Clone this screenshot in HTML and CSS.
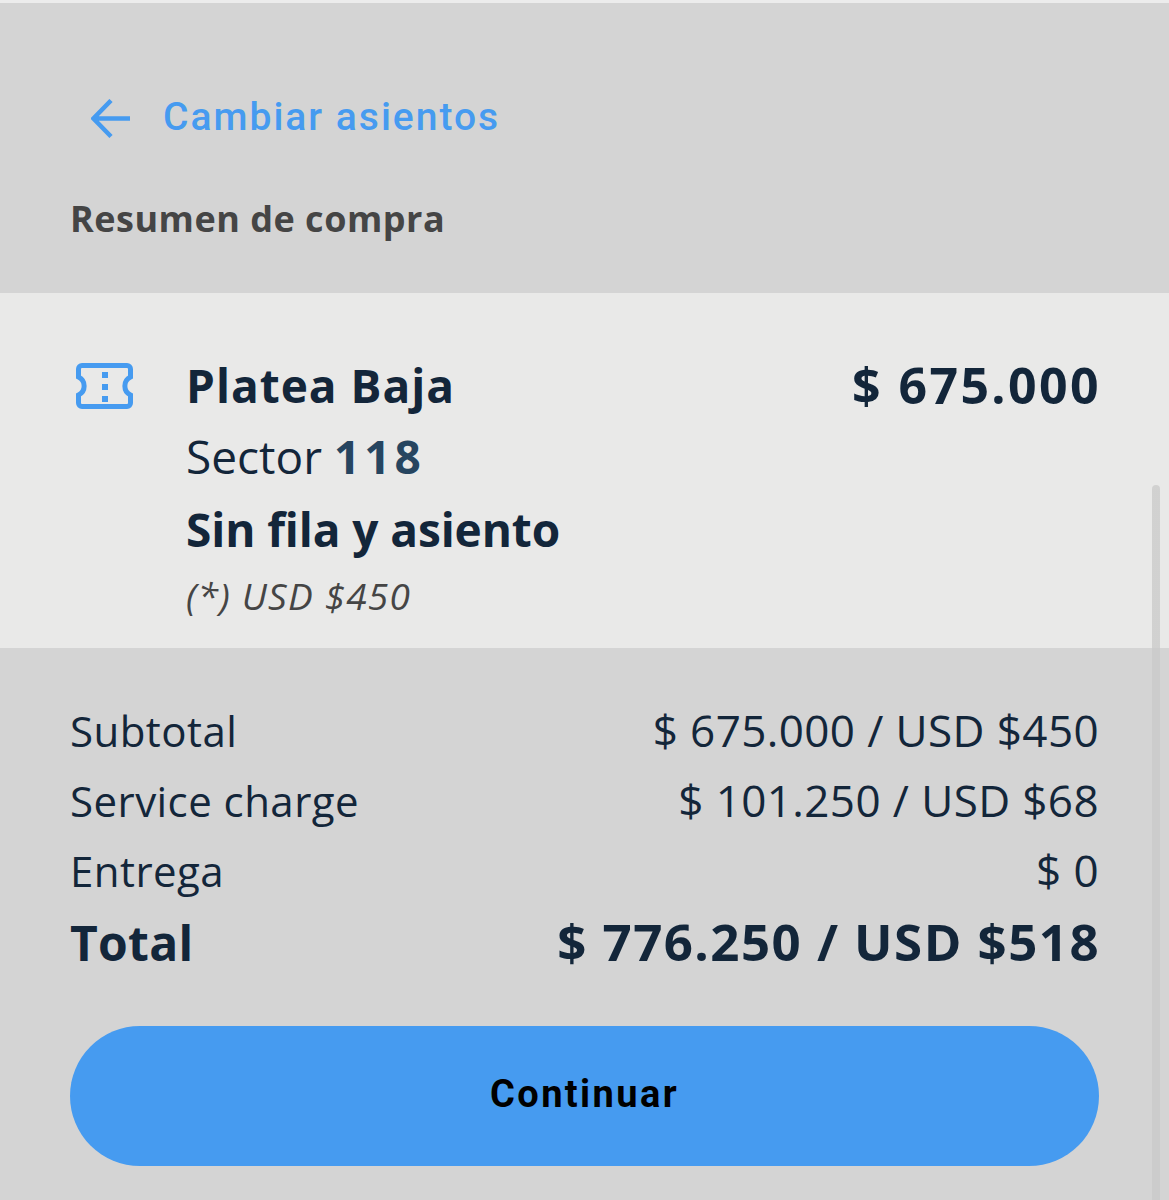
FILE: index.html
```html
<!DOCTYPE html>
<html lang="es">

<head>
    <meta charset="UTF-8">
    <meta name="viewport" content="width=device-width, initial-scale=1.0">
    <title>Resumen de compra</title>
    <link rel="stylesheet" href="styles.css">
</head>

<body>
    <div class="screen">
        <header class="top">
            <a class="back-link" href="#">
                <svg class="back-icon" viewBox="0 0 40 40" aria-hidden="true">
                    <path d="M39 19.500H4M20 1.500 2.500 19.500 20 37.500" />
                </svg>
                <span>Cambiar asientos</span>
            </a>
            <h2 class="section-title">Resumen de compra</h2>
        </header>

        <section class="ticket">
            <svg class="ticket-icon" viewBox="0 0 60 48" aria-hidden="true">
                <path class="ticket-outline" d="M7 3.500H52a3.500 3.500 0 0 1 3.500 3.500V15a10 10 0 0 0 0 18V41a3.500 3.500 0 0 1-3.500 3.500H7a3.500 3.500 0 0 1-3.500-3.500V33a10 10 0 0 0 0-18V7a3.500 3.500 0 0 1 3.500-3.500Z" />
                <rect x="27" y="10" width="6" height="6" />
                <rect x="27" y="22" width="6" height="6" />
                <rect x="27" y="34" width="6" height="6" />
            </svg>
            <div class="ticket-info">
                <div class="ticket-name">Platea Baja</div>
                <div class="ticket-sector">Sector <b>118</b></div>
                <div class="ticket-seat">Sin fila y asiento</div>
                <div class="ticket-usd">(*) USD $450</div>
            </div>
            <div class="ticket-price">$ 675.000</div>
        </section>

        <section class="totals">
            <div class="row"><span>Subtotal</span><span class="amount">$ 675.000 / USD $450</span></div>
            <div class="row"><span>Service charge</span><span class="amount">$ 101.250 / USD $68</span></div>
            <div class="row"><span>Entrega</span><span class="amount">$ 0</span></div>
            <div class="row row-total"><span>Total</span><span class="amount">$ 776.250 / USD $518</span></div>
            <button class="continue" type="button">Continuar</button>
        </section>

        <div class="scrollbar"></div>
    </div>
</body>

</html>
```

FILE: styles.css
```css
:root {
    --fondo: #d4d4d4;
    --tarjeta: #e9e9e8;
    --azul: #469bf0;
    --texto: #13263a;
    --gris: #454545;
}

html,
body {
    margin: 0;
    background-color: var(--fondo);
}

.screen {
    position: relative;
    width: 1169px;
    height: 1200px;
    overflow: hidden;
    border-top: 3px solid #ececec;
    box-sizing: border-box;
    font-family: 'Open Sans', 'Noto Sans', sans-serif;
    color: var(--texto);
}

.top {
    height: 290px;
    padding: 0 70px;
    box-sizing: border-box;
}

.back-link {
    display: flex;
    align-items: center;
    gap: 32px;
    padding: 93px 0 0 21px;
    height: 42px;
    color: var(--azul);
    text-decoration: none;
    font-family: Roboto, sans-serif;
    font-size: 39px;
    font-weight: 500;
    letter-spacing: 2px;
}

.back-icon {
    width: 40px;
    height: 40px;
    margin-top: 4px;
    fill: none;
    stroke: var(--azul);
    stroke-width: 4.5;
}

.section-title {
    margin: 57px 0 0;
    font-size: 36px;
    line-height: 48px;
    font-weight: 700;
    letter-spacing: 0.5px;
    color: var(--gris);
}

.ticket {
    display: flex;
    align-items: flex-start;
    height: 355px;
    padding: 56px 70px 0 75px;
    box-sizing: border-box;
    background-color: var(--tarjeta);
}

.ticket-icon {
    flex: none;
    width: 60px;
    height: 48px;
    margin-top: 13px;
    margin-right: 51px;
    fill: var(--azul);
}

.ticket-outline {
    fill: none;
    stroke: var(--azul);
    stroke-width: 5;
}

.ticket-info {
    flex: 1;
}

.ticket-name,
.ticket-seat,
.ticket-price {
    font-size: 46px;
    font-weight: 700;
    line-height: 72px;
}

.ticket-name {
    letter-spacing: 1px;
}

.ticket-seat {
    letter-spacing: -0.1px;
    margin-top: 1px;
}

.ticket-price {
    font-size: 50px;
    letter-spacing: 2.4px;
    margin-right: -2px;
}

.ticket-sector {
    font-size: 46px;
    line-height: 72px;
    margin-top: -1px;
}

.ticket-sector b {
    color: #264560;
    letter-spacing: 4px;
}

.ticket-usd {
    font-size: 37px;
    font-style: italic;
    line-height: 62px;
    letter-spacing: 1.2px;
    color: var(--gris);
}

.totals {
    padding: 47px 70px 0;
}

.row {
    display: flex;
    justify-content: space-between;
    align-items: baseline;
    height: 70px;
    font-size: 42px;
    line-height: 70px;
    letter-spacing: 0.45px;
}

.amount {
    font-size: 44px;
    letter-spacing: 0.4px;
}

.row-total {
    height: 72px;
    font-size: 48px;
    font-weight: 700;
    letter-spacing: 0.3px;
    line-height: 72px;
}

.row-total .amount {
    font-size: 51px;
    letter-spacing: 1.45px;
    margin-right: -1px;
}

.continue {
    display: block;
    width: 100%;
    height: 140px;
    margin-top: 49px;
    padding: 0 0 4px;
    border: 0;
    border-radius: 70px;
    background-color: var(--azul);
    color: #000;
    font-family: Roboto, sans-serif;
    font-size: 38px;
    font-weight: 700;
    letter-spacing: 2.4px;
}

/* scroll thumb, almost gone below the card */
.scrollbar {
    position: absolute;
    top: 482px;
    right: 9px;
    bottom: 0;
    width: 8px;
    border-radius: 4px 4px 0 0;
    background: linear-gradient(rgba(0, 0, 0, 0.1) 163px, rgba(0, 0, 0, 0.04) 163px);
}
```
